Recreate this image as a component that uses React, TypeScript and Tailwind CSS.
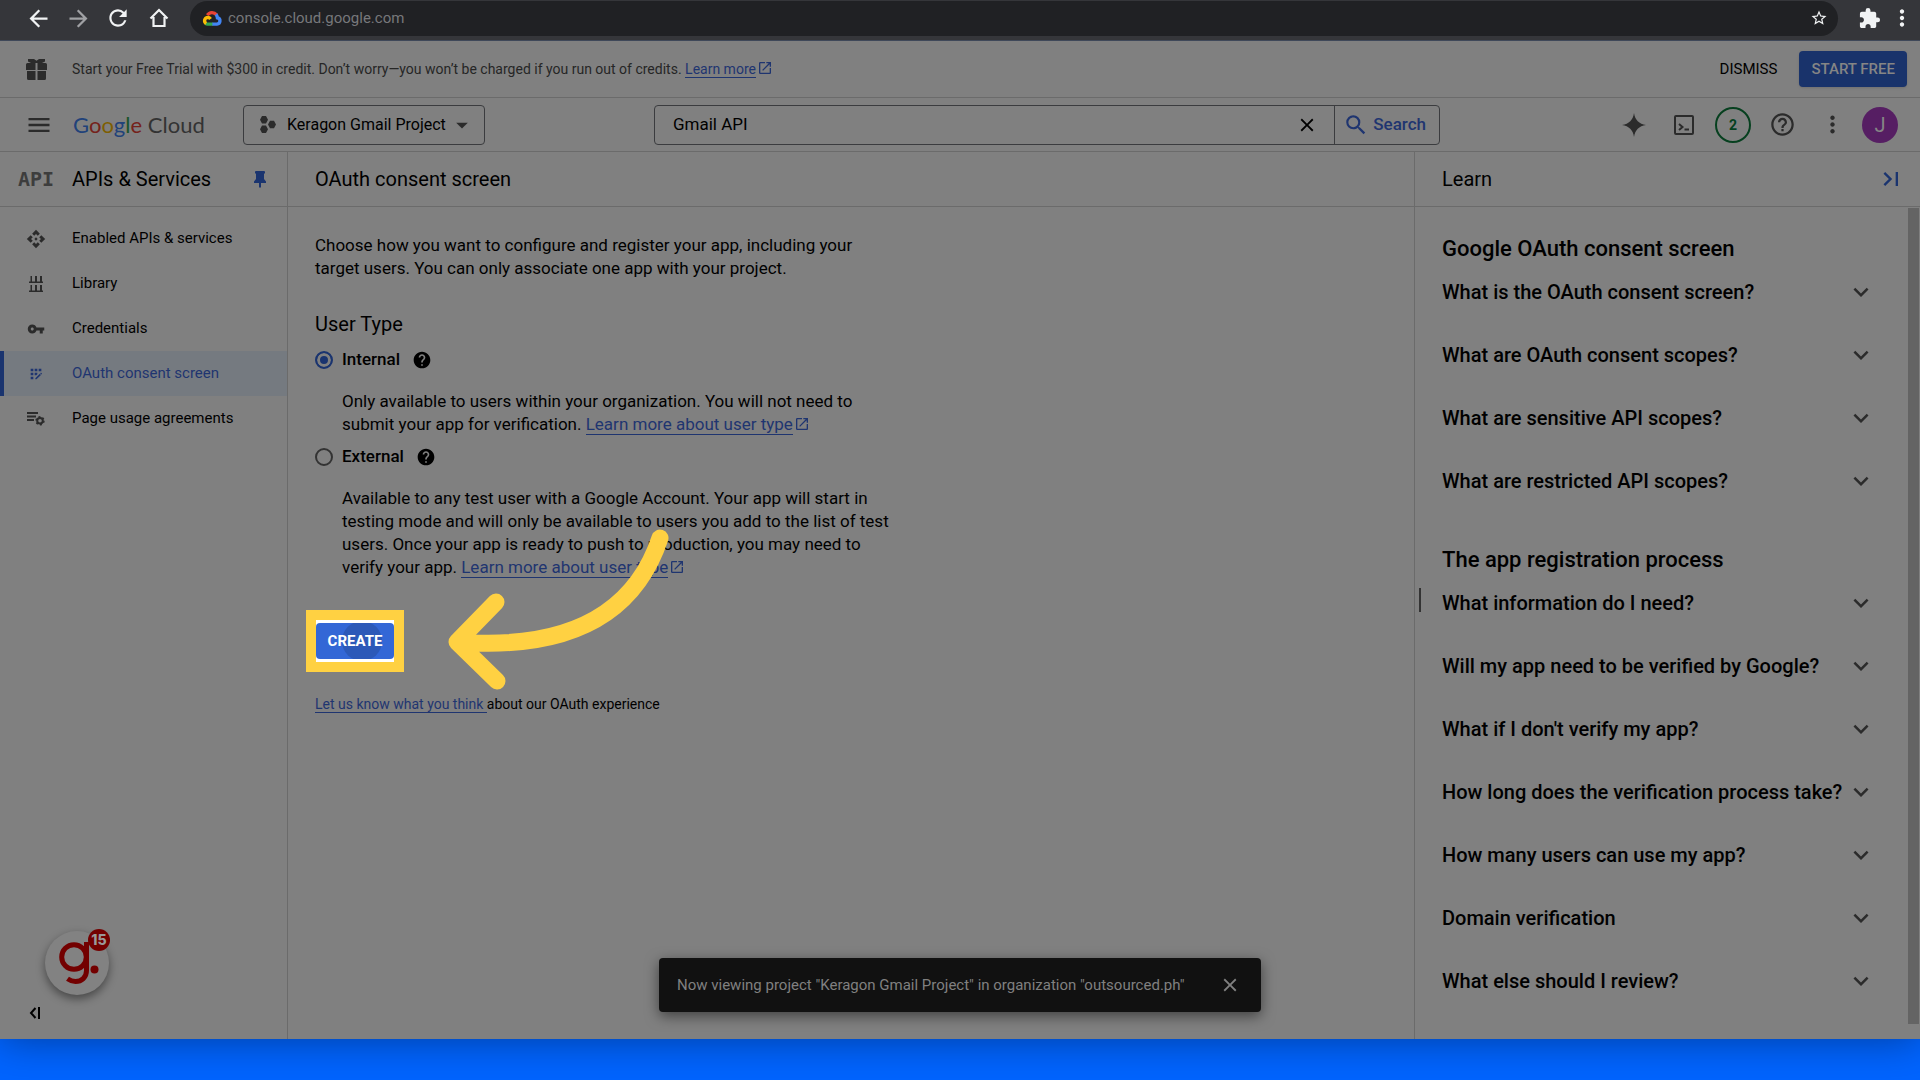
import type { ReactNode } from "react";
import {
  MdApi,
  MdAppRegistration,
  MdArrowBack,
  MdArrowDropDown,
  MdArrowForward,
  MdClose,
  MdExtension,
  MdHelp,
  MdHelpOutline,
  MdKeyboardArrowDown,
  MdLastPage,
  MdMenu,
  MdMoreVert,
  MdOpenInNew,
  MdRefresh,
  MdSearch,
  MdStarBorder,
  MdVpnKey,
} from "react-icons/md";

const HomeIcon = () => (
  <svg viewBox="0 0 20 20" className="size-5" fill="none" stroke="#f1f3f4" strokeWidth="2.2">
    <path d="M1.5 10.5 10 2l8.500 8.500M4.500 9v9h11V9" />
  </svg>
);

const CloudLogo = () => (
  <svg viewBox="0 0 24 20" className="h-4 w-5 shrink-0" fill="none" strokeWidth="4.200">
    <path d="M6.200 6.400A7 7 0 0 1 17.600 6" stroke="#ea4335" />
    <path d="M17 5.500a7.500 7.500 0 0 1 1.800 4.200 4 4 0 0 1-.6 7.900H12" stroke="#4285f4" />
    <path d="M12.500 17.600H6.400a4 4 0 0 1-2.400-.8" stroke="#34a853" />
    <path d="M4.600 17a4.300 4.300 0 0 1 1.800-7.800c1.800 0 3 .8 3.800 2" stroke="#fbbc05" />
  </svg>
);

const GiftIcon = () => (
  <svg viewBox="0 0 21 21" className="size-[21px]" fill="#2b2b2b">
    <path d="M2 0h6l2.500 1.800L13 0h6v2.500L16 4h3.500A1.500 1.500 0 0 1 21 5.500V11h-9.500V4h-2v7H0V5.500A1.500 1.500 0 0 1 1.500 4H5L2 2.500z" />
    <path d="M1 12h8.500v9h-7A1.500 1.500 0 0 1 1 19.500zM11.500 12H20v7.500a1.500 1.500 0 0 1-1.500 1.500h-7z" />
  </svg>
);

const ProjectIcon = () => (
  <svg viewBox="0 0 16 17" className="h-[17px] w-4" fill="#2b2b2b">
    <path d="M2 0h4l2 3.700-2 3.700H2L0 3.700zM10 4.800h4l2 3.700-2 3.700h-4L8 8.500zM2 9.600h4l2 3.700L6 17H2l-2-3.700z" />
  </svg>
);

const SparkIcon = () => (
  <svg viewBox="0 0 24 24" className="size-6" fill="#2b2b2b">
    <path d="M12 0c1 7 5 11 12 12-7 1-11 5-12 12-1-7-5-11-12-12C7 11 11 7 12 0z" />
  </svg>
);

const ShellIcon = () => (
  <svg viewBox="0 0 20 20" className="size-5" fill="none" stroke="#2b2b2b" strokeWidth="2">
    <rect x="1" y="1" width="18" height="18" rx="1" />
    <path d="m5 9 3.500 3L5 15M10.500 14.500H15" />
  </svg>
);

const PinIcon = () => (
  <svg viewBox="0 0 12 17" className="h-[17px] w-3" fill="#1a346f">
    <path d="M2 0h8a1 1 0 0 1 1 1v1l-1 1v5l2 2.500V12H7v4l-1 1-1-1v-4H0v-1.500L2 8V3L1 2V1a1 1 0 0 1 1-1z" />
  </svg>
);

const LibraryIcon = () => (
  <svg viewBox="0 0 14 16" className="h-4 w-3.500" fill="#2b2b2b">
    <path d="M1.500 0H3v5.500h3V0h2v5.500h3V0h2v5.500h1V7H0V5.500h1.500zM1.500 9H3v5.500h3V9h2v5.500h3V9h2v5.500h1V16H0v-1.500h1.500z" />
  </svg>
);

const AgreementsIcon = () => (
  <svg viewBox="0 0 18 15" className="h-[15px] w-[18px]" fill="none" stroke="#2b2b2b">
    <path d="M0 2h11M0 5.500h9M0 9h7" strokeWidth="1.800" />
    <circle cx="13" cy="9.800" r="2.800" strokeWidth="2" />
    <circle cx="13" cy="9.800" r="4" strokeWidth="1.400" strokeDasharray="2 2.190" />
  </svg>
);

const CollapseIcon = () => (
  <svg viewBox="0 0 12 12" className="size-3" fill="none" stroke="#000" strokeWidth="2">
    <path d="M6.500 1 2 6l4.500 5M10 0v12" />
  </svg>
);

const GuideLogo = () => (
  <svg viewBox="0 0 64 64" className="size-16" fill="none" stroke="#730000" strokeWidth="5">
    <circle cx="29" cy="26" r="12.300" />
    <path d="M41.500 11v28.500c0 7-5 11-11 11-3 0-5-.7-8-2.800" />
    <circle cx="49.500" cy="38.500" r="4" fill="#730000" stroke="none" />
  </svg>
);

const navItems: { label: string; icon: ReactNode; active?: boolean }[] = [
  { label: "Enabled APIs & services", icon: <MdApi className="size-5" /> },
  { label: "Library", icon: <LibraryIcon /> },
  { label: "Credentials", icon: <MdVpnKey className="size-[18px]" /> },
  { label: "OAuth consent screen", icon: <MdAppRegistration className="size-4" />, active: true },
  { label: "Page usage agreements", icon: <AgreementsIcon /> },
];

const learnSections = [
  {
    title: "Google OAuth consent screen",
    items: [
      "What is the OAuth consent screen?",
      "What are OAuth consent scopes?",
      "What are sensitive API scopes?",
      "What are restricted API scopes?",
    ],
  },
  {
    title: "The app registration process",
    items: [
      "What information do I need?",
      "Will my app need to be verified by Google?",
      "What if I don't verify my app?",
      "How long does the verification process take?",
      "How many users can use my app?",
      "Domain verification",
      "What else should I review?",
    ],
  },
];

function DocLink({ children }: { children: ReactNode }) {
  return (
    <a href="#docs" className="whitespace-nowrap text-[#1f3570]">
      <span className="border-b border-[#1f3570]">{children}</span>
      <MdOpenInNew className="ml-px inline size-4 align-[-2px]" />
    </a>
  );
}

function UserType({ label, checked, children }: { label: string; checked?: boolean; children: ReactNode }) {
  return (
    <div>
      <div className="flex h-6 items-center">
        <label className="flex items-center gap-[9px] font-medium">
          <input
            type="radio"
            name="user-type"
            defaultChecked={checked}
            className="size-[18px] appearance-none rounded-full border-2 border-[#333] checked:border-[#1a346f] checked:bg-[#1a346f] checked:shadow-[inset_0_0_0_3px_#808080]"
          />
          {label}
        </label>
        <button type="button" aria-label={"Help about " + label} className="ml-3">
          <MdHelp className="size-5" />
        </button>
      </div>
      <p className="mt-[18px] pl-[27px] leading-[23px]">{children}</p>
    </div>
  );
}

export default function App() {
  return (
    <div className="flex min-h-screen flex-col bg-[#0064ff] font-[Roboto,sans-serif] text-base text-black">
      <div className="relative flex grow flex-col bg-[#808080] shadow-[0_0_40px_rgba(0,0,0,0.400)]">
        <nav aria-label="Browser" className="flex h-[41px] items-center border-b border-[#3f4859] bg-[#35363a] pb-1 text-[#f1f3f4]">
          <div className="flex w-[190px] shrink-0 items-center gap-[13px] pl-[25px]">
            <button type="button" aria-label="Back"><MdArrowBack className="size-[27px]" /></button>
            <button type="button" aria-label="Forward" className="text-[#a0a1a4]"><MdArrowForward className="size-[27px]" /></button>
            <button type="button" aria-label="Reload"><MdRefresh className="size-[26px]" /></button>
            <button type="button" aria-label="Home" className="ml-[5px]"><HomeIcon /></button>
          </div>
          <div className="flex h-[35px] grow items-center rounded-full bg-[#202124] pr-[10px] pl-3">
            <CloudLogo />
            <input
              aria-label="Address"
              defaultValue="console.cloud.google.com"
              className="ml-1.5 min-w-0 grow bg-transparent text-[15px] text-[#77787b] outline-none"
            />
            <button type="button" aria-label="Bookmark"><MdStarBorder className="size-[18px]" /></button>
          </div>
          <div className="flex w-[82px] shrink-0 items-center pl-5">
            <button type="button" aria-label="Extensions"><MdExtension className="size-[23px]" /></button>
            <button type="button" aria-label="Browser menu" className="ml-2"><MdMoreVert className="size-[26px]" /></button>
          </div>
        </nav>

        <div className="flex h-[57px] items-center border-b border-[#6b6b6b] pr-[13px] pl-[26px]">
          <GiftIcon />
          <p className="ml-[25px] text-sm text-[#262626]">
            Start your Free Trial with $300 in credit. Don’t worry—you won’t be charged if you run out of credits.{" "}
            <DocLink>Learn more</DocLink>
          </p>
          <button type="button" className="ml-auto text-[15px]">DISMISS</button>
          <button type="button" className="ml-[22px] h-9 rounded bg-[#19336b] px-3 text-[15px] font-medium text-[#858585] shadow">
            START FREE
          </button>
        </div>

        <header className="flex h-[54px] items-center border-b border-[#6b6b6b] pr-[22px] pl-[25px]">
          <button type="button" aria-label="Navigation menu" className="text-[#2b2b2b]"><MdMenu className="size-7" /></button>
          <a href="#home" className="ml-5 w-[170px] shrink-0 font-[Lato,sans-serif] text-[22px] text-[#333]">
            <span className="text-[#21427a]">G</span>
            <span className="text-[#75221b]">o</span>
            <span className="text-[#7e5e02]">o</span>
            <span className="text-[#21427a]">g</span>
            <span className="text-[#1a542a]">l</span>
            <span className="text-[#75221b]">e</span> Cloud
          </a>
          <button type="button" className="flex h-10 w-[242px] shrink-0 items-center rounded border border-[#3b3c3f] pl-4">
            <ProjectIcon />
            <span className="ml-[11px]">Keragon Gmail Project</span>
            <MdArrowDropDown className="ml-0.5 size-7 text-[#2b2b2b]" />
          </button>
          <form className="ml-[169px] flex h-10 w-[786px] items-center rounded border border-[#3b3c3f] text-[17px]" onSubmit={(e) => e.preventDefault()}>
            <input aria-label="Search products and resources" defaultValue="Gmail API" className="min-w-0 grow bg-transparent pl-[18px] outline-none" />
            <button type="button" aria-label="Clear search" className="mr-4"><MdClose className="size-[22px]" /></button>
            <button type="submit" className="flex h-full items-center gap-1 border-l border-[#3b3c3f] pr-[13px] pl-2 font-medium text-[#1f3570]">
              <MdSearch className="size-[26px]" />
              Search
            </button>
          </form>
          <div className="ml-auto flex items-center text-[#2b2b2b]">
            <button type="button" aria-label="Assistant"><SparkIcon /></button>
            <button type="button" aria-label="Cloud Shell" className="ml-7"><ShellIcon /></button>
            <button type="button" aria-label="Notifications" className="ml-[21px] size-9 rounded-full border-2 border-[#06401f] text-sm font-bold text-[#06401f]">
              2
            </button>
            <button type="button" aria-label="Help" className="ml-[18px]"><MdHelpOutline className="size-[27px]" /></button>
            <button type="button" aria-label="More options" className="ml-[23px]"><MdMoreVert className="size-[27px]" /></button>
            <button type="button" aria-label="Account" className="ml-4 size-9 rounded-full bg-[#561e63] text-xl text-[#858585]">J</button>
          </div>
        </header>

        <div className="flex grow">
          <aside className="relative flex w-72 shrink-0 flex-col border-r border-[#6b6b6b]">
            <div className="flex h-[55px] items-center border-b border-[#6b6b6b] pr-[21px] pl-[18px]">
              <span className="w-[54px] font-['DejaVu_Sans_Mono',monospace] text-xl font-bold text-[#3d3d3d]">API</span>
              <h2 className="text-xl">APIs &amp; Services</h2>
              <button type="button" aria-label="Unpin menu" className="ml-auto"><PinIcon /></button>
            </div>
            <nav aria-label="APIs & Services" className="flex flex-col pt-[9px] text-[15px]">
              {navItems.map((item) => (
                <a
                  key={item.label}
                  href="#nav"
                  className={
                    item.active
                      ? "flex h-[45px] items-center border-l-4 border-[#1a346f] bg-[#757a80] text-[#1f3570]"
                      : "flex h-[45px] items-center border-l-4 border-transparent"
                  }
                >
                  <span className={item.active ? "flex w-16 justify-center" : "flex w-16 justify-center text-[#2b2b2b]"}>{item.icon}</span>
                  <span className="ml-1">{item.label}</span>
                </a>
              ))}
            </nav>
            <button
              type="button"
              aria-label="Guided help"
              className="absolute bottom-11 left-[45px] size-16 rounded-full bg-[#828282] shadow-[0_4px_10px_rgba(0,0,0,0.450)]"
            >
              <GuideLogo />
              <span className="absolute -top-0.5 -right-px grid size-[22px] place-items-center rounded-full bg-[#730000] font-[Inter,sans-serif] text-sm font-extrabold text-[#999]">
                15
              </span>
            </button>
            <button type="button" aria-label="Collapse menu" className="mt-auto mb-5 ml-[29px] w-3"><CollapseIcon /></button>
          </aside>

          <main className="min-w-0 grow">
            <div className="flex h-[55px] items-center border-b border-[#6b6b6b] pl-[27px]">
              <h1 className="text-xl">OAuth consent screen</h1>
            </div>
            <div className="pt-[27px] pl-[27px] text-[17px]">
              <p className="w-[570px] leading-[23px]">
                Choose how you want to configure and register your app, including your target users. You can only associate one app with your project.
              </p>
              <h2 className="mt-8 text-xl leading-6">User Type</h2>
              <div className="mt-3 flex w-[580px] flex-col gap-[9px]">
                <UserType label="Internal" checked>
                  Only available to users within your organization. You will not need to submit your app for verification.{" "}
                  <DocLink>Learn more about user type</DocLink>
                </UserType>
                <UserType label="External">
                  Available to any test user with a Google Account. Your app will start in testing mode and will only be available to users you add to the list of test users. Once your app is ready to push to production, you may need to verify your app.{" "}
                  <DocLink>Learn more about user type</DocLink>
                </UserType>
              </div>
              <div className="relative mt-[31px] -ml-[9px] w-fit border-10 border-[#ffd142] bg-white py-[3px]">
                <button type="button" className="relative h-9 w-[78px] overflow-hidden rounded-sm bg-[#3367d6] text-[15px] font-bold text-white">
                  <span className="absolute top-[-2px] left-[26px] size-10 rounded-full bg-[#2c59b8]" />
                  <span className="relative">CREATE</span>
                </button>
                <svg
                  viewBox="440 520 240 180"
                  className="pointer-events-none absolute -top-[100px] left-[124px] h-[180px] w-60"
                  fill="none"
                  stroke="#ffd142"
                  strokeWidth="17"
                  strokeLinecap="round"
                  strokeLinejoin="round"
                  aria-hidden="true"
                >
                  <path d="M660 538C640 598 589 652 458 642M496 602 457 642 497 681" />
                </svg>
              </div>
              <p className="mt-5 text-sm leading-6">
                <a href="#feedback" className="border-b border-[#1f3570] text-[#1f3570]">Let us know what you think </a>
                about our OAuth experience
              </p>
            </div>
          </main>

          <aside className="relative w-[506px] shrink-0 border-l border-[#6b6b6b]">
            <div className="flex h-[55px] items-center border-b border-[#6b6b6b] pr-[15px] pl-[27px]">
              <h2 className="text-xl">Learn</h2>
              <button type="button" aria-label="Hide learn panel" className="ml-auto text-[#1a346f]"><MdLastPage className="size-7" /></button>
            </div>
            <div className="flex flex-col gap-[27px] pt-[26px] pr-11 pl-[27px]">
              {learnSections.map((section) => (
                <section key={section.title}>
                  <h3 className="text-[22px] leading-8 font-medium">{section.title}</h3>
                  {section.items.map((item) => (
                    <button key={item} type="button" className="mb-[9px] flex h-[54px] w-full items-center justify-between text-left text-xl font-medium whitespace-nowrap">
                      {item}
                      <MdKeyboardArrowDown className="size-[30px] shrink-0 text-[#2b2b2b]" />
                    </button>
                  ))}
                </section>
              ))}
            </div>
            <span className="absolute top-[436px] left-1 h-6 w-0.5 bg-[#333]" />
            <span className="absolute top-14 right-px bottom-[15px] w-[11px] bg-[#646464]" />
          </aside>
        </div>

        <div role="status" className="absolute bottom-[27px] left-1/2 flex h-[54px] w-[602px] -translate-x-1/2 items-center justify-between rounded bg-[#111] pr-5 pl-[18px] text-[15px] text-[#808080] shadow-[0_4px_14px_rgba(0,0,0,0.500)]">
          Now viewing project "Keragon Gmail Project" in organization "outsourced.ph"
          <button type="button" aria-label="Close message"><MdClose className="size-[22px]" /></button>
        </div>
      </div>
      <div className="h-[41px] shrink-0" />
    </div>
  );
}
